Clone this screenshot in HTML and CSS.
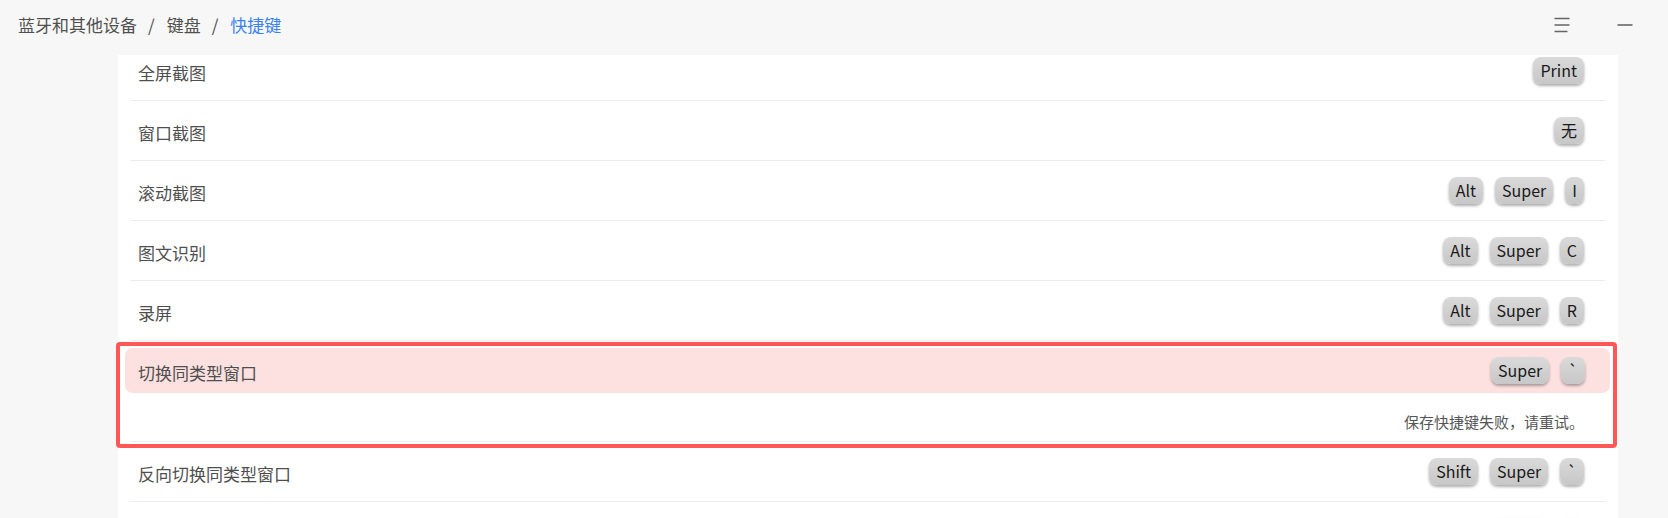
FILE: index.html
```html
<!DOCTYPE html>
<html lang="zh-CN">
<head>
<meta charset="utf-8">
<title>快捷键</title>
<link rel="stylesheet" href="styles.css">
</head>
<body>
<div class="window">
  <header class="titlebar">
    <nav class="crumbs">
      <span class="crumb">蓝牙和其他设备</span>
      <span class="sep">/</span>
      <span class="crumb">键盘</span>
      <span class="sep">/</span>
      <span class="crumb current">快捷键</span>
    </nav>
    <div class="controls">
      <button class="ctl" aria-label="菜单">
        <svg width="16" height="16" viewBox="0 0 16 16"><path d="M0.5 1.5h15M0.5 8h15M0.5 14.5h13" stroke="#666" stroke-width="1.6" fill="none"/></svg>
      </button>
      <button class="ctl" aria-label="最小化">
        <svg width="16" height="4" viewBox="0 0 16 4"><path d="M0.5 2h15" stroke="#666" stroke-width="1.6" fill="none"/></svg>
      </button>
    </div>
  </header>
  <main class="panel">
    <div class="list">
      <div class="row"><span class="label">全屏截图</span><span class="keys"><kbd>Print</kbd></span></div>
      <div class="row"><span class="label">窗口截图</span><span class="keys"><kbd>无</kbd></span></div>
      <div class="row"><span class="label">滚动截图</span><span class="keys"><kbd>Alt</kbd><kbd>Super</kbd><kbd>I</kbd></span></div>
      <div class="row"><span class="label">图文识别</span><span class="keys"><kbd>Alt</kbd><kbd>Super</kbd><kbd>C</kbd></span></div>
      <div class="row"><span class="label">录屏</span><span class="keys"><kbd>Alt</kbd><kbd>Super</kbd><kbd>R</kbd></span></div>
      <div class="item-error">
        <div class="row-hl"><span class="label">切换同类型窗口</span><span class="keys"><kbd>Super</kbd><kbd>`</kbd></span></div>
        <div class="err">保存快捷键失败，请重试。</div>
      </div>
      <div class="row"><span class="label">反向切换同类型窗口</span><span class="keys"><kbd>Shift</kbd><kbd>Super</kbd><kbd>`</kbd></span></div>
      <div class="row"><span class="label">显示工作区</span><span class="keys"><kbd>Super</kbd><kbd>S</kbd></span></div>
    </div>
  </main>
</div>
</body>
</html>
```
FILE: styles.css
```css
html, body {
  margin: 0;
  padding: 0;
}
body {
  width: 1668px;
  height: 518px;
  overflow: hidden;
  background: #f7f7f7;
  font-family: "Noto Sans CJK SC", "Noto Sans", sans-serif;
}
.window {
  display: flex;
  flex-direction: column;
  height: 518px;
}
.titlebar {
  height: 50px;
  flex: none;
  display: flex;
  align-items: center;
  justify-content: space-between;
  padding-left: 18px;
  margin-bottom: 5px;
}
.crumbs {
  display: flex;
  align-items: center;
  font-size: 17px;
  color: #505050;
  line-height: 24px;
}
.sep {
  margin: 0 12px 0 11px;
}
.crumb.current {
  color: #3b82f0;
}
.controls {
  display: flex;
  gap: 13px;
  padding-right: 18px;
  align-self: stretch;
}
.ctl {
  width: 50px;
  border: 0;
  background: transparent;
  padding: 0;
  display: flex;
  align-items: center;
  justify-content: center;
}
.panel {
  flex: 1;
  margin-left: 118px;
  width: 1500px;
  background: #fff;
  overflow-x: visible;
  overflow-y: clip;
}
.list {
  margin-top: -14px;
}
.row {
  height: 59px;
  margin: 0 13px 0 12px;
  padding: 0 21px 0 8px;
  border-bottom: 1px solid #ececec;
  display: flex;
  align-items: center;
  justify-content: space-between;
}
.label {
  font-size: 17px;
  color: #4f4f4f;
  line-height: 24px;
  padding-top: 4px;
}
.keys {
  display: flex;
  gap: 12px;
}
kbd {
  font-family: "Noto Sans CJK SC", "Noto Sans", sans-serif;
  font-size: 16px;
  line-height: 27px;
  height: 27px;
  padding: 0 7px;
  border-radius: 8px;
  color: #1a1a1a;
  background: linear-gradient(#dadada, #c7c7c7);
  box-shadow: 0 2px 3px rgba(0, 0, 0, 0.32);
}
.item-error {
  position: relative;
  padding-top: 7px;
}
.item-error::after {
  content: "";
  position: absolute;
  left: -2px;
  right: 1px;
  top: 1px;
  bottom: -6px;
  border: 4px solid #ff5656;
  border-radius: 4px;
  pointer-events: none;
  z-index: 2;
}
.row-hl {
  height: 45px;
  margin: 0 8px 0 7px;
  padding: 0 25px 0 13px;
  border-radius: 8px;
  background: #fde0e0;
  display: flex;
  align-items: center;
  justify-content: space-between;
}
.err {
  margin: 0 13px 0 12px;
  padding: 19px 21px 9px 8px;
  border-bottom: 1px solid #ececec;
  text-align: right;
  font-size: 15px;
  line-height: 20px;
  color: #555;
}
```
